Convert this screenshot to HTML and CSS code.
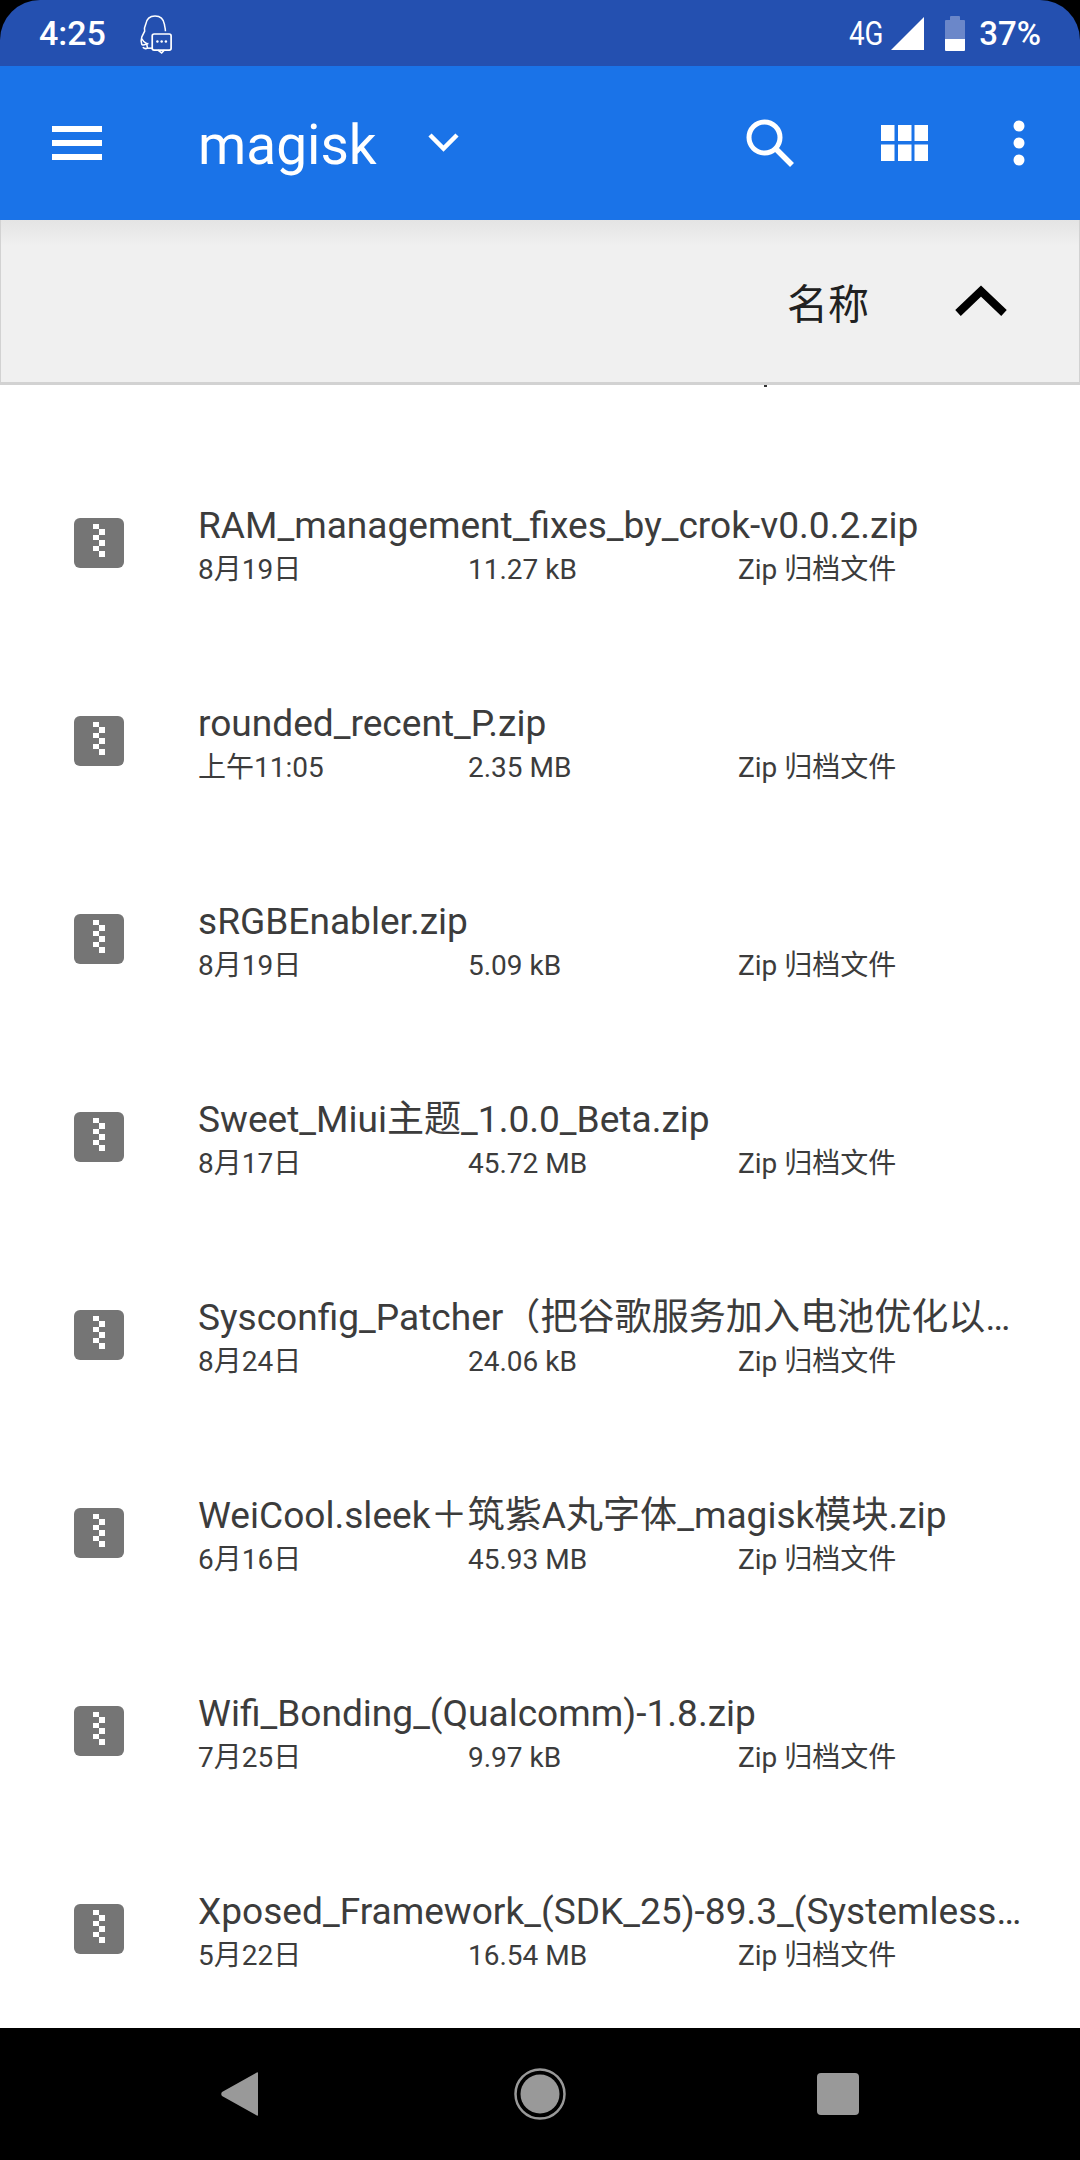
FILE: index.html
```html
<!DOCTYPE html>
<html lang="zh">
<head>
<meta charset="utf-8">
<title>magisk</title>
<link rel="stylesheet" href="styles.css">
</head>
<body>
<div class="phone">
  <header class="status">
    <div class="status-left">
      <span class="time">4:25</span>
      <svg class="qq" viewBox="0 0 36 42" width="34" height="40"><path d="M10 31c-2 0-6 3-7 1-1-3-1-5 0-8l3-6c-1-3 0-5 1-7 1-6 5-9 10-9s9 3 10 9c0 2 1 4 1 7" fill="none" stroke="#fff" stroke-width="1.6"/><path d="M3 26c1 2 2 4 5 5l1 5c-2 1-4 0-5-1" fill="none" stroke="#fff" stroke-width="1.6"/><path d="M9 36h5" stroke="#fff" stroke-width="1.6"/><rect x="14" y="21" width="20" height="17" rx="2" fill="none" stroke="#fff" stroke-width="1.8"/><path d="M20 38l4 3 3-3" fill="none" stroke="#fff" stroke-width="1.6"/><circle cx="19.5" cy="29" r="1.3" fill="#fff"/><circle cx="24" cy="29" r="1.3" fill="#fff"/><circle cx="28.5" cy="29" r="1.3" fill="#fff"/></svg>
    </div>
    <div class="status-right">
      <span class="net">4G</span>
      <svg class="signal" viewBox="0 0 33 33" width="33" height="33"><path d="M0 33L33 0v33z" fill="#fff"/></svg>
      <svg class="battery" viewBox="0 0 20 36" width="20" height="36"><path d="M5 2a1 1 0 0 1 1-1h8a1 1 0 0 1 1 1v3H5z" fill="#6b87c9"/><path d="M0 6a1 1 0 0 1 1-1h18a1 1 0 0 1 1 1v18H0z" fill="#6b87c9"/><path d="M0 24h20v11a1 1 0 0 1-1 1H1a1 1 0 0 1-1-1z" fill="#fff"/></svg>
      <span class="pct">37%</span>
    </div>
  </header>
  <div class="toolbar">
    <svg class="menu" viewBox="0 0 50 34" width="50" height="34"><path d="M0 0h50v6H0zM0 14h50v6H0zM0 28h50v6H0z" fill="#fff"/></svg>
    <span class="title">magisk</span>
    <svg class="caret" viewBox="0 0 33 20" width="33" height="20"><path d="M3 3l13.500 13.500L30 3" fill="none" stroke="#fff" stroke-width="4.5"/></svg>
    <div class="actions">
      <svg class="search" viewBox="0 0 48 48" width="48" height="48"><circle cx="18.500" cy="18.500" r="15.500" fill="none" stroke="#fff" stroke-width="5"/><path d="M30 30l16 16" stroke="#fff" stroke-width="5.5"/></svg>
      <svg class="grid" viewBox="0 0 47 36" width="47" height="36"><path d="M0 0h13.500v16H0zM17 0h13.500v16H17zM33.500 0H47v16H33.500zM0 19.500h13.500V36H0zM17 19.500h13.500V36H17zM33.500 19.500H47V36H33.500z" fill="#fff"/></svg>
      <svg class="more" viewBox="0 0 12 46" width="12" height="46"><circle cx="6" cy="6" r="5.500" fill="#fff"/><circle cx="6" cy="23" r="5.500" fill="#fff"/><circle cx="6" cy="40" r="5.500" fill="#fff"/></svg>
    </div>
  </div>
  <div class="sortbar">
    <span class="sort-label">名称</span>
    <svg class="sort-arrow" viewBox="0 0 52 32" width="52" height="32"><path d="M3 28L26 6l23 22" fill="none" stroke="#000" stroke-width="8"/></svg>
  </div>
  <span class="speck"></span>
  <main class="list">
    <div class="row"><svg class="zip" viewBox="0 0 50 50" width="50" height="50"><use href="#zipicon"/></svg><div class="info"><div class="name">RAM_management_fixes_by_crok-v0.0.2.zip</div><div class="meta"><span class="date">8月19日</span><span class="size">11.27 kB</span><span class="type">Zip 归档文件</span></div></div></div>
    <div class="row"><svg class="zip" viewBox="0 0 50 50" width="50" height="50"><use href="#zipicon"/></svg><div class="info"><div class="name">rounded_recent_P.zip</div><div class="meta"><span class="date">上午11:05</span><span class="size">2.35 MB</span><span class="type">Zip 归档文件</span></div></div></div>
    <div class="row"><svg class="zip" viewBox="0 0 50 50" width="50" height="50"><use href="#zipicon"/></svg><div class="info"><div class="name">sRGBEnabler.zip</div><div class="meta"><span class="date">8月19日</span><span class="size">5.09 kB</span><span class="type">Zip 归档文件</span></div></div></div>
    <div class="row"><svg class="zip" viewBox="0 0 50 50" width="50" height="50"><use href="#zipicon"/></svg><div class="info"><div class="name">Sweet_Miui主题_1.0.0_Beta.zip</div><div class="meta"><span class="date">8月17日</span><span class="size">45.72 MB</span><span class="type">Zip 归档文件</span></div></div></div>
    <div class="row"><svg class="zip" viewBox="0 0 50 50" width="50" height="50"><use href="#zipicon"/></svg><div class="info"><div class="name">Sysconfig_Patcher（把谷歌服务加入电池优化以…</div><div class="meta"><span class="date">8月24日</span><span class="size">24.06 kB</span><span class="type">Zip 归档文件</span></div></div></div>
    <div class="row"><svg class="zip" viewBox="0 0 50 50" width="50" height="50"><use href="#zipicon"/></svg><div class="info"><div class="name">WeiCool.sleek＋筑紫A丸字体_magisk模块.zip</div><div class="meta"><span class="date">6月16日</span><span class="size">45.93 MB</span><span class="type">Zip 归档文件</span></div></div></div>
    <div class="row"><svg class="zip" viewBox="0 0 50 50" width="50" height="50"><use href="#zipicon"/></svg><div class="info"><div class="name">Wifi_Bonding_(Qualcomm)-1.8.zip</div><div class="meta"><span class="date">7月25日</span><span class="size">9.97 kB</span><span class="type">Zip 归档文件</span></div></div></div>
    <div class="row"><svg class="zip" viewBox="0 0 50 50" width="50" height="50"><use href="#zipicon"/></svg><div class="info"><div class="name">Xposed_Framework_(SDK_25)-89.3_(Systemless…</div><div class="meta"><span class="date">5月22日</span><span class="size">16.54 MB</span><span class="type">Zip 归档文件</span></div></div></div>
  </main>
  <nav class="navbar">
    <svg class="nav-back" viewBox="0 0 38 46" width="38" height="46"><path d="M37 2v42c0 1-1 1-2 0L1 25c-1-1-1-3 0-4L35 2c1-1 2-1 2 0z" fill="#999"/></svg>
    <svg class="nav-home" viewBox="0 0 52 52" width="52" height="52"><circle cx="26" cy="26" r="24.500" fill="none" stroke="#999" stroke-width="2.500"/><circle cx="26" cy="26" r="19.500" fill="#999"/></svg>
    <svg class="nav-recent" viewBox="0 0 42 42" width="42" height="42"><rect width="42" height="42" rx="4" fill="#999"/></svg>
  </nav>
</div>
<svg class="defs" width="0" height="0"><defs><g id="zipicon"><rect width="50" height="50" rx="6" fill="#757575"/><path d="M19 6h6v5h-6zM25 11h6v6h-6zM19 17h6v5h-6zM25 22h6v6h-6zM19 28h6v5h-6zM25 33h6v6h-6z" fill="#fff"/></g></defs></svg>
</body>
</html>
```
FILE: styles.css
```css
* { box-sizing: border-box; }
html, body { margin: 0; padding: 0; background: #000; }
body { font-family: Roboto, "Noto Sans CJK SC", sans-serif; }
.phone { position: relative; width: 1080px; height: 2160px; display: flex; flex-direction: column; background: #000; overflow: hidden; }
.defs { position: absolute; }

.status { height: 66px; background: #2450b0; color: #fff; border-radius: 40px 40px 0 0; display: flex; align-items: center; justify-content: space-between; padding: 0 39px 0 39px; flex: none; }
.status-left { display: flex; align-items: center; gap: 33px; }
.time { font-size: 34px; font-weight: 500; }
.qq { margin-top: 1px; }
.status-right { display: flex; align-items: center; }
.net { font-size: 33px; transform: scaleX(.84); transform-origin: left; width: 35px; }
.signal { margin-left: 7px; }
.battery { margin-left: 21px; }
.pct { font-size: 33px; font-weight: 500; margin-left: 14px; }

.toolbar { height: 154px; background: #1a73e8; display: flex; align-items: center; padding-left: 52px; flex: none; }
.menu { flex: none; }
.title { color: #fff; font-size: 55px; margin-left: 96px; margin-top: 4px; }
.caret { margin-left: 50px; margin-bottom: 2px; }
.actions { margin-left: auto; display: flex; align-items: center; padding-right: 55px; }
.grid { margin-left: 87px; }
.more { margin-left: 85px; }

.sortbar { height: 165px; background: linear-gradient(#e4e4e4, #f0f0f0 26px); border: 1px solid #d2d2d2; border-top: 0; border-bottom: 3px solid #d2d2d2; display: flex; align-items: center; justify-content: flex-end; padding-right: 72px; flex: none; }
.sort-label { font-family: "Noto Sans CJK SC", sans-serif; font-size: 41px; color: #212121; margin-right: 86px; }
.sort-arrow { flex: none; }
.speck { position: absolute; left: 764px; top: 385px; width: 3px; height: 2px; background: #333; }

.list { flex: 1; background: #fff; padding-top: 59px; display: flex; flex-direction: column; overflow: hidden; }
.row { height: 198px; flex: none; display: flex; align-items: center; padding-left: 74px; }
.zip { flex: none; }
.info { margin-left: 74px; min-width: 0; flex: 1; padding-top: 4px; }
.name { font-size: 37.1px; line-height: 44px; color: #3c3c3c; white-space: nowrap; }
.meta { display: flex; font-size: 28px; line-height: 32px; color: #3c3c3c; margin-top: 6px; }
.date { width: 270px; }
.size { width: 270px; }

.navbar { height: 132px; flex: none; background: #000; display: flex; align-items: center; padding-left: 221px; }
.nav-back { flex: none; }
.nav-home { margin-left: 255px; flex: none; }
.nav-recent { margin-left: 251px; flex: none; }
```
